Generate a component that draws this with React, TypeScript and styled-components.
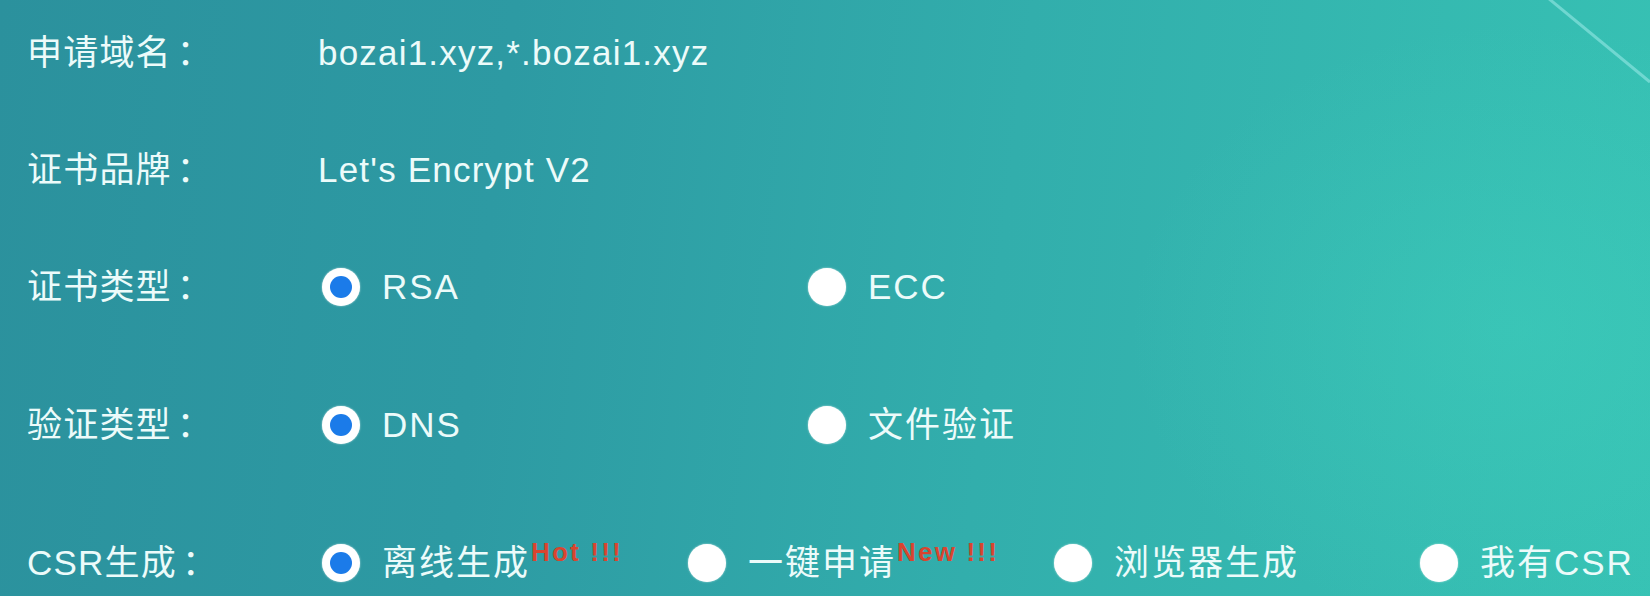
import React from "react";
import styled, { createGlobalStyle } from "styled-components";

const GlobalStyle = createGlobalStyle`
  html, body { margin: 0; padding: 0; }
  body {
    font-family: "Liberation Sans", "Noto Sans CJK SC", sans-serif;
    -webkit-font-smoothing: antialiased;
  }
`;

const Page = styled.div`
  position: relative;
  width: 1650px;
  height: 596px;
  overflow: hidden;
  background:
    radial-gradient(ellipse 560px 440px at 1520px 330px, rgba(66, 212, 192, 0.35), rgba(66, 212, 192, 0) 70%),
    linear-gradient(97deg, #2b919d 0%, #2d9aa3 30%, #32aeac 60%, #37c2b4 100%);
  color: #ecfbfa;
`;

const Streak = styled.svg`
  position: absolute;
  top: 0;
  right: 0;
  pointer-events: none;
`;

const Form = styled.div`
  display: flex;
  flex-direction: column;
  padding: 23px 0 0 27px;
`;

const Row = styled.div<{ $gap: number }>`
  display: grid;
  grid-template-columns: 291px 1fr;
  align-items: center;
  height: 60px;
  margin-top: ${(p) => p.$gap}px;
`;

const Label = styled.div`
  font-size: 35px;
  letter-spacing: 1.2px;
  line-height: 60px;
  white-space: nowrap;
`;

const Colon = styled.span`
  margin-left: 5px;
`;

const Value = styled.div`
  font-size: 35px;
  letter-spacing: 1.2px;
  line-height: 60px;
  white-space: nowrap;
`;

const Options = styled.div`
  display: flex;
  align-items: center;
  padding-left: 4px;
`;

const Option = styled.label<{ $w?: number }>`
  display: flex;
  align-items: center;
  gap: 22px;
  flex: none;
  width: ${(p) => (p.$w ? `${p.$w}px` : "auto")};
  font-size: 35px;
  letter-spacing: 2px;
  white-space: nowrap;
`;

const Radio = styled.span<{ $checked?: boolean }>`
  position: relative;
  flex: none;
  width: 38px;
  height: 38px;
  border-radius: 50%;
  background: #ffffff;
  box-shadow: 0 0 2px rgba(255, 255, 255, 0.7);
  &::after {
    content: "";
    position: absolute;
    left: 8px;
    top: 8px;
    width: 22px;
    height: 22px;
    border-radius: 50%;
    background: #1b7be9;
    display: ${(p) => (p.$checked ? "block" : "none")};
  }
`;

const OptionText = styled.span`
  line-height: 40px;
`;

const Badge = styled.span`
  position: relative;
  top: -14px;
  margin-left: 1px;
  font-size: 26px;
  font-weight: 700;
  letter-spacing: 2.2px;
  color: #d8452f;
  line-height: 1;
`;

type Opt = { text: string; checked?: boolean; badge?: string };

const RadioGroup: React.FC<{ options: Opt[]; width?: number }> = ({ options, width }) => (
  <Options>
    {options.map((o) => (
      <Option key={o.text} $w={width}>
        <Radio $checked={o.checked} />
        <OptionText>
          {o.text}
          {o.badge && <Badge>{o.badge}</Badge>}
        </OptionText>
      </Option>
    ))}
  </Options>
);

const FieldLabel: React.FC<{ text: string }> = ({ text }) => (
  <Label>
    {text}
    <Colon>：</Colon>
  </Label>
);

export default function App() {
  return (
    <>
      <GlobalStyle />
      <Page>
        <Streak width="104" height="90" viewBox="0 0 104 90">
          <line x1="2" y1="-2" x2="104" y2="82" stroke="rgba(150, 232, 228, 0.6)" strokeWidth="3" />
        </Streak>
        <Form>
          <Row $gap={0}>
            <FieldLabel text="申请域名" />
            <Value>bozai1.xyz,*.bozai1.xyz</Value>
          </Row>
          <Row $gap={57}>
            <FieldLabel text="证书品牌" />
            <Value>Let's Encrypt V2</Value>
          </Row>
          <Row $gap={57}>
            <FieldLabel text="证书类型" />
            <RadioGroup
              width={486}
              options={[{ text: "RSA", checked: true }, { text: "ECC" }]}
            />
          </Row>
          <Row $gap={78}>
            <FieldLabel text="验证类型" />
            <RadioGroup
              width={486}
              options={[{ text: "DNS", checked: true }, { text: "文件验证" }]}
            />
          </Row>
          <Row $gap={78}>
            <FieldLabel text="CSR生成" />
            <RadioGroup
              width={366}
              options={[
                { text: "离线生成", checked: true, badge: "Hot !!!" },
                { text: "一键申请", badge: "New !!!" },
                { text: "浏览器生成" },
                { text: "我有CSR" },
              ]}
            />
          </Row>
        </Form>
      </Page>
    </>
  );
}
